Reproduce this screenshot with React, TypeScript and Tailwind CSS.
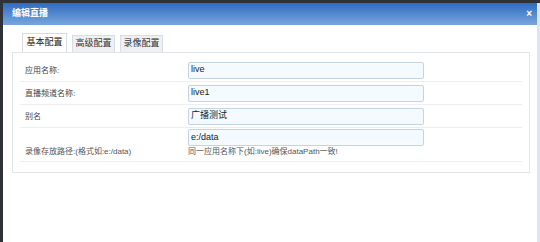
const rows = [
  { label: '应用名称:', value: 'live' },
  { label: '直播频道名称:', value: 'live1' },
  { label: '别名', value: '广播测试' },
]

export default function App() {
  return (
    <div
      className="w-[540px] h-[242px] bg-[#2f3236] pl-[3px] pt-[3px] overflow-hidden"
      style={{ fontFamily: '"Liberation Sans", "Noto Sans CJK SC", sans-serif' }}
    >
      <div className="h-full bg-white border-r-[3px] border-[#dbe6f3] flex flex-col">
        <div className="h-[22px] shrink-0 flex items-center justify-between pl-[9px] pr-[5px] bg-gradient-to-b from-[#2e6bc1] to-[#79a6dd]">
          <span className="text-white text-[9px] font-bold">编辑直播</span>
          <span className="text-white text-[10px] font-bold leading-none">×</span>
        </div>

        <div className="px-[9px] pt-[8px]">
          <div className="flex items-end gap-[5px] pl-[10px] h-[19px]">
            <div className="h-[19px] w-[45px] flex items-center justify-center bg-white border border-b-0 border-[#d8dde4] text-[9px] text-[#222]">
              基本配置
            </div>
            <div className="h-[17px] w-[43px] flex items-center justify-center bg-[#eef0f4] border border-b-0 border-[#d8dde4] text-[9px] text-[#333]">
              高级配置
            </div>
            <div className="h-[17px] w-[43px] flex items-center justify-center bg-[#eef0f4] border border-b-0 border-[#d8dde4] text-[9px] text-[#333]">
              录像配置
            </div>
          </div>

          <div className="w-[518px] border border-[#e2e6ec] px-[7px] pt-[6px] pb-[10px]">
            {rows.map((r) => (
              <div key={r.label} className="flex items-center h-[23px] border-b border-[#eceef1]">
                <span className="w-[168px] pl-[5px] pt-[2px] text-[8px] text-[#444]">{r.label}</span>
                <div className="w-[236px] h-[17px] border border-[#c6d4e2] bg-[#f5faff] rounded-[2px] flex items-center px-[2px] text-[9px] text-[#222]">
                  {r.value}
                </div>
              </div>
            ))}
            <div className="flex items-end h-[34px] pb-[3px] border-b border-[#eceef1]">
              <span className="w-[168px] pl-[5px] text-[8px] text-[#555] leading-[12px]">录像存放路径:(格式如:e:/data)</span>
              <div className="flex flex-col">
                <div className="w-[236px] h-[17px] border border-[#c6d4e2] bg-[#f5faff] rounded-[2px] flex items-center px-[2px] text-[9px] text-[#222]">
                  e:/data
                </div>
                <span className="text-[8px] text-[#555] leading-[12px]">同一应用名称下(如:live)确保dataPath一致!</span>
              </div>
            </div>
          </div>
        </div>
      </div>
    </div>
  )
}
